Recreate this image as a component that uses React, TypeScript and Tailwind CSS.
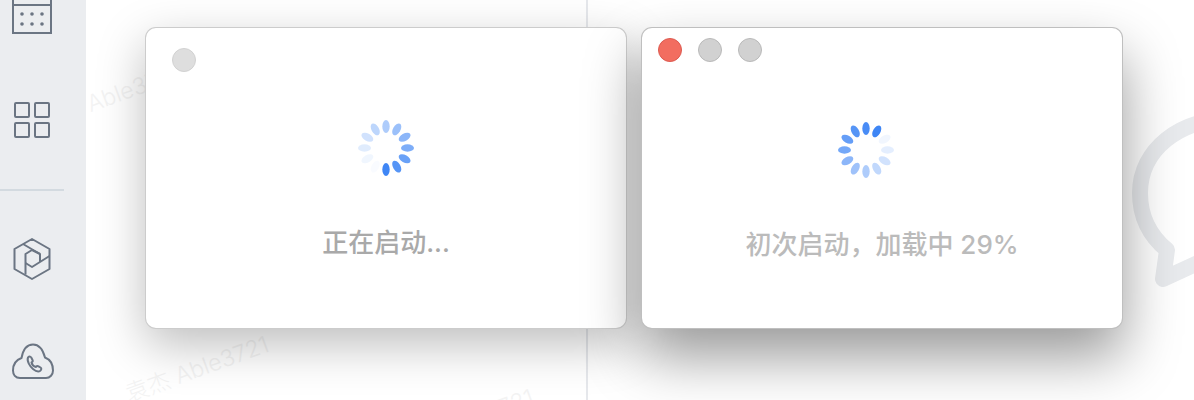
import React from 'react';

const CJK = "font-['Inter','Noto_Sans_CJK_SC',sans-serif] antialiased";

const angles = [0, 30, 60, 90, 120, 150, 180, 210, 240, 270, 300, 330];

const Spinner = ({ opacities, blurred }: { opacities: number[]; blurred?: boolean }) => (
  <svg width="60" height="60" viewBox="0 0 60 60" className={blurred ? 'blur-[0.6px]' : ''}>
    {angles.map((a, i) => (
      <ellipse key={a} cx="30" cy="8.5" rx="3.7" ry="6.5" fill="#3f86f5" opacity={opacities[i]} transform={`rotate(${a} 30 30)`} />
    ))}
  </svg>
);

const WatermarkText = ({ className }: { className: string }) => (
  <div className={`absolute -rotate-[20deg] whitespace-nowrap text-[23px] font-light text-[#f3f3f3] ${CJK} ${className}`}>袁杰 Able3721</div>
);

export default function App() {
  return (
    <div className="flex h-[400px] w-[1194px] overflow-hidden bg-white">
      {/* Sidebar */}
      <aside className="flex h-full w-[86px] shrink-0 flex-col bg-[#ebedf0]">
        <svg width="64" height="34" viewBox="0 0 64 34" fill="none" stroke="#6b7583" strokeWidth="2">
          <path d="M13 -4V33H51V-4" />
          <path d="M13 5H51" />
          <g fill="#6b7583" stroke="none">
            <circle cx="22" cy="14" r="1.8" /><circle cx="32" cy="14" r="1.8" /><circle cx="42" cy="14" r="1.8" />
            <circle cx="22" cy="24" r="1.8" /><circle cx="32" cy="24" r="1.8" /><circle cx="42" cy="24" r="1.8" />
          </g>
        </svg>
        <svg className="mt-[68px]" width="64" height="38" viewBox="0 0 64 38" fill="none" stroke="#6b7583" strokeWidth="2">
          <rect x="15" y="1" width="14" height="14" rx="1" />
          <rect x="35" y="1" width="14" height="14" rx="1" />
          <rect x="15" y="21" width="14" height="14" rx="1" />
          <rect x="35" y="21" width="14" height="14" rx="1" />
        </svg>
        <div className="mt-[49px] h-0.5 w-16 bg-[#d3dae0]" />
        <svg className="mt-[47px]" width="64" height="42" viewBox="0 0 64 42" fill="none" stroke="#6b7583" strokeWidth="2" strokeLinejoin="round">
          <path d="M32 1L49.5 11V31L32 41L14.5 31V11Z" />
          <path d="M23 6L40 16V24" />
          <path d="M49.5 18L32 29L25.5 25" />
          <path d="M25.5 36.5V16L32 12L40 16" />
        </svg>
        <svg className="mt-[63px]" width="64" height="36" viewBox="0 0 64 36" fill="none" stroke="#6b7583" strokeWidth="2" strokeLinejoin="round">
          <path d="M20 35C15.5 35 13 31.5 13 27.5C13 22 16 17 21.5 15C23 7 27 1.5 33 1.5C39 1.5 43 7 45 14.5C50 16.5 53 21.5 53 27.5C53 31.5 50 35 46 35Z" />
          <path d="M28 14.5C29.5 13 31 13.5 31.5 15L32.5 17C33 18 32.5 19 31.5 19.5C32 21.5 34 23.5 36 24C36.7 23 37.5 22.7 38.5 23.3L40.5 24.5C41.7 25.3 41.5 26.7 40.3 27.7C38.5 29 36 28.5 33 26C30 23.5 26.5 18 28 14.5Z" />
        </svg>
      </aside>

      {/* Main area */}
      <main className="relative flex-1 overflow-hidden">
        <div className="h-full w-[502px] border-r-2 border-[#e6e8ec]" />
        <WatermarkText className="left-[-52px] top-[80px]" />
        <WatermarkText className="left-[36px] top-[352px]" />
        <WatermarkText className="left-[301px] top-[405px]" />

        {/* Large chat bubble in the background */}
        <svg className="absolute left-[1034px] top-[100px] text-[#e8eaed]" width="74" height="200" viewBox="0 0 74 200" fill="none" stroke="currentColor" strokeWidth="16" strokeLinejoin="round">
          <path d="M110 20C60 18 20 50 20 93C20 117 30 136 47 150L43 179L80 162" />
        </svg>

        {/* Window 1 */}
        <div className="absolute left-[59px] top-[27px] flex h-[302px] w-[482px] flex-col items-center overflow-hidden rounded-[11px] border border-black/20 bg-white pl-[26px] pt-[20px] shadow-[0_16px_48px_rgba(0,0,0,0.26)]">
          <div className="flex w-full">
            <div className="h-6 w-6 rounded-full border border-[#d2d2d2] bg-[#dedede]" />
          </div>
          <div className="-ml-[26px] mt-[46px]">
            <Spinner blurred opacities={[0.42, 0.52, 0.6, 0.68, 0.78, 0.88, 1, 0.03, 0.08, 0.16, 0.24, 0.34]} />
          </div>
          <div className={`-ml-[26px] mt-[49px] text-[26px] font-medium leading-8 text-[#a9a9a9] ${CJK}`}>正在启动...</div>
        </div>

        {/* Window 2 */}
        <div className="absolute left-[555px] top-[27px] flex h-[302px] w-[482px] flex-col items-center overflow-hidden rounded-[11px] border border-black/25 bg-white pl-[16px] pt-[10px] shadow-[0_28px_56px_rgba(0,0,0,0.4)]">
          <div className="flex w-full gap-4">
            <div className="h-6 w-6 rounded-full border border-[#dc5a50] bg-[#f26d60]" />
            <div className="h-6 w-6 rounded-full border border-[#b9b9b9] bg-[#d1d1d1]" />
            <div className="h-6 w-6 rounded-full border border-[#b9b9b9] bg-[#d1d1d1]" />
          </div>
          <div className="-ml-[48px] mt-[58px]">
            <Spinner opacities={[0.95, 1, 0.07, 0.14, 0.24, 0.32, 0.42, 0.5, 0.6, 0.72, 0.8, 0.88]} />
          </div>
          <div className={`-ml-[16px] mt-[49px] text-[26px] font-medium leading-8 text-[#bbbbbb] ${CJK}`}>初次启动，加载中 29%</div>
        </div>
      </main>
    </div>
  );
}
